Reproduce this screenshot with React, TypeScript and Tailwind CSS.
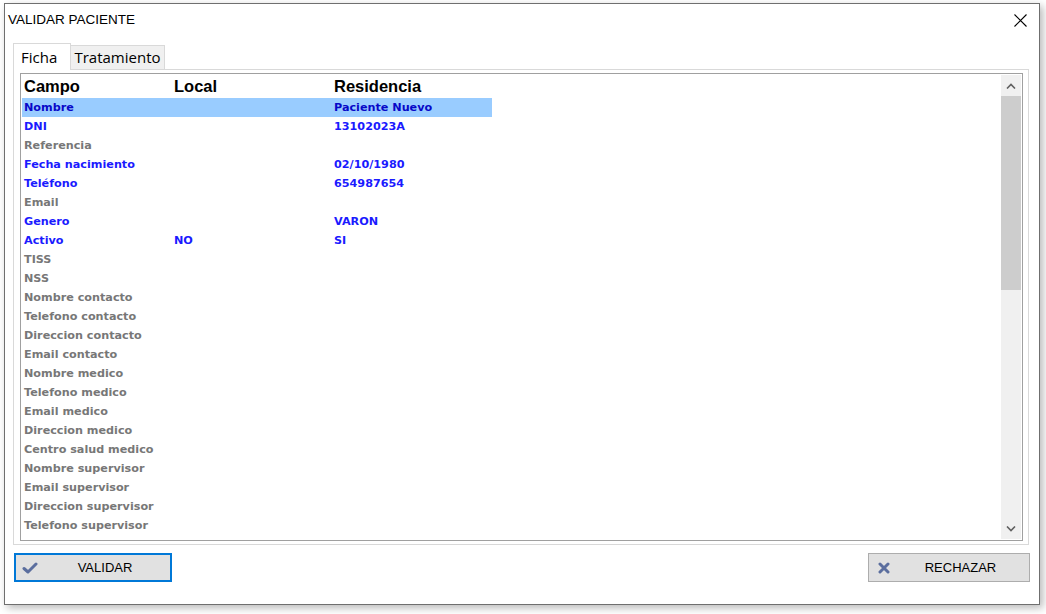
import React from "react";

type Row = { campo: string; local?: string; residencia?: string; tone: "blue" | "gray"; selected?: boolean };

const rows: Row[] = [
  { campo: "Nombre", residencia: "Paciente Nuevo", tone: "blue", selected: true },
  { campo: "DNI", residencia: "13102023A", tone: "blue" },
  { campo: "Referencia", tone: "gray" },
  { campo: "Fecha nacimiento", residencia: "02/10/1980", tone: "blue" },
  { campo: "Teléfono", residencia: "654987654", tone: "blue" },
  { campo: "Email", tone: "gray" },
  { campo: "Genero", residencia: "VARON", tone: "blue" },
  { campo: "Activo", local: "NO", residencia: "SI", tone: "blue" },
  { campo: "TISS", tone: "gray" },
  { campo: "NSS", tone: "gray" },
  { campo: "Nombre contacto", tone: "gray" },
  { campo: "Telefono contacto", tone: "gray" },
  { campo: "Direccion contacto", tone: "gray" },
  { campo: "Email contacto", tone: "gray" },
  { campo: "Nombre medico", tone: "gray" },
  { campo: "Telefono medico", tone: "gray" },
  { campo: "Email medico", tone: "gray" },
  { campo: "Direccion medico", tone: "gray" },
  { campo: "Centro salud medico", tone: "gray" },
  { campo: "Nombre supervisor", tone: "gray" },
  { campo: "Email supervisor", tone: "gray" },
  { campo: "Direccion supervisor", tone: "gray" },
  { campo: "Telefono supervisor", tone: "gray" },
];

function CheckIcon() {
  return (
    <svg width="16" height="14" viewBox="0 0 16 14">
      <path d="M2 7.5 L6 11 L14 3" fill="none" stroke="#5b6e9e" strokeWidth="3" strokeLinecap="round" strokeLinejoin="round" />
    </svg>
  );
}

function CrossIcon() {
  return (
    <svg width="12" height="12" viewBox="0 0 12 12">
      <path d="M2 2 L10 10 M10 2 L2 10" fill="none" stroke="#5b6e9e" strokeWidth="3" strokeLinecap="round" />
    </svg>
  );
}

export default function App() {
  return (
    <div className="w-[1046px] h-[614px] bg-white pt-[3px] pl-[4px]" style={{ fontFamily: "'Liberation Sans', Arial, sans-serif" }}>
      <div className="w-[1036px] h-[602px] bg-white border border-[#6f6f6f] shadow-[3px_3px_8px_rgba(0,0,0,0.28)] flex flex-col">
        {/* Title bar */}
        <div className="h-[32px] flex items-center justify-between pl-[3px] pr-[12px]">
          <span className="text-[13.5px] text-black">VALIDAR PACIENTE</span>
          <svg width="13" height="13" viewBox="0 0 13 13">
            <path d="M0.5 0.5 L12.5 12.5 M12.5 0.5 L0.5 12.5" stroke="#000" strokeWidth="1.1" />
          </svg>
        </div>

        {/* Tabs */}
        <div className="mt-[7px] ml-[8px] mr-[10px] flex flex-col">
          <div className="flex items-end h-[26px]" style={{ fontFamily: "'Open Sans', sans-serif" }}>
            <div className="h-[27px] w-[58px] bg-white border border-b-0 border-[#d9d9d9] text-[15px] flex items-center pl-[7px] relative z-10 -mb-px">
              Ficha
            </div>
            <div className="h-[24px] w-[94px] bg-[#f0f0f0] border border-b-0 border-l-0 border-[#d9d9d9] text-[15px] flex items-center justify-center">
              Tratamiento
            </div>
          </div>
          <div className="h-[476px] border border-[#d9d9d9] pt-[3px] pl-[6px] pr-[5px] pb-[3px]">
            <div className="h-full border border-[#a0a0a0] flex">
              <div className="flex-1 overflow-hidden">
                <div className="flex h-[24px] items-center pt-[1px] text-[16.5px] font-bold text-black">
                  <div className="w-[153px] pl-[3px]">Campo</div>
                  <div className="w-[160px]">Local</div>
                  <div className="w-[160px]">Residencia</div>
                </div>
                <div style={{ fontFamily: "'DejaVu Sans', Verdana, sans-serif" }} className="text-[11.2px] font-bold">
                  {rows.map((r) => (
                    <div
                      key={r.campo}
                      className={
                        "flex h-[19px] items-center pt-[2px] ml-[1px] w-[470px] " +
                        (r.selected ? "bg-[#99ccff] text-[#0808c8]" : r.tone === "blue" ? "text-[#1a1aff]" : "text-[#777777]")
                      }
                    >
                      <div className="w-[150px] pl-[2px]">{r.campo}</div>
                      <div className="w-[160px] pl-[2px]">{r.local}</div>
                      <div className="w-[160px] pl-[2px]">{r.residencia}</div>
                    </div>
                  ))}
                </div>
              </div>
              {/* Scrollbar */}
              <div className="w-[20px] bg-[#f0f0f0] flex flex-col mt-[1px] mb-[1px] mr-[1px]">
                <div className="h-[21px] flex items-center justify-center">
                  <svg width="10" height="6" viewBox="0 0 10 6">
                    <path d="M1 5.5 L5 1.5 L9 5.5" fill="none" stroke="#606060" strokeWidth="1.6" />
                  </svg>
                </div>
                <div className="h-[194px] bg-[#cdcdcd]" />
                <div className="flex-1" />
                <div className="h-[20px] flex items-center justify-center">
                  <svg width="10" height="6" viewBox="0 0 10 6">
                    <path d="M1 0.5 L5 4.5 L9 0.5" fill="none" stroke="#606060" strokeWidth="1.6" />
                  </svg>
                </div>
              </div>
            </div>
          </div>
        </div>

        {/* Buttons */}
        <div className="mt-[8px] ml-[9px] mr-[9px] flex justify-between">
          <button className="w-[158px] h-[29px] bg-[#e1e1e1] border-2 border-[#0078d7] flex items-center pl-[6px] text-[13px] text-black">
            <CheckIcon />
            <span className="flex-1 text-center pl-[2px]">VALIDAR</span>
          </button>
          <button className="w-[162px] h-[29px] bg-[#e1e1e1] border border-[#adadad] flex items-center pl-[9px] text-[13px] text-black">
            <CrossIcon />
            <span className="flex-1 text-center pl-[2px]">RECHAZAR</span>
          </button>
        </div>
      </div>
    </div>
  );
}
